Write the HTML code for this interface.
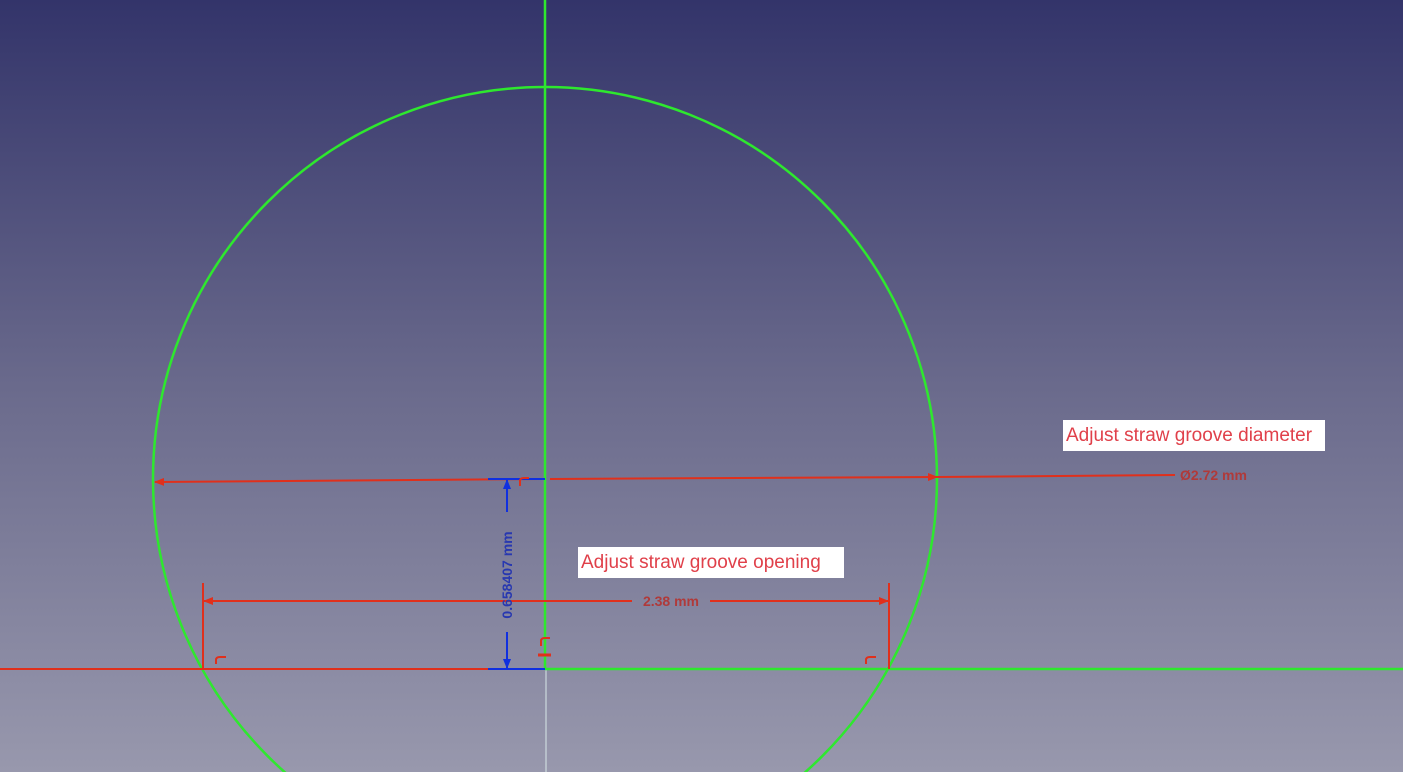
<!DOCTYPE html>
<html><head><style>
html,body{margin:0;padding:0;width:1403px;height:772px;overflow:hidden}
body{background:linear-gradient(#33346a 0%,#6a6a8c 50%,#9898ad 100%);position:relative}
svg{display:block}
.lbl{position:absolute;background:#fff;color:#e0404a;font:19px "Liberation Sans",sans-serif;padding:0 3px;height:31px;line-height:31px;box-sizing:border-box;white-space:nowrap;overflow:hidden}
</style></head><body>
<svg width="1403" height="772" style="position:absolute;left:0;top:0">
<defs>
<marker id="ar" markerWidth="10" markerHeight="8" refX="9" refY="4" orient="auto" markerUnits="userSpaceOnUse"><path d="M0,0L10,4L0,8z" fill="#e0301c"/></marker>
<marker id="ab" markerWidth="10" markerHeight="8" refX="9" refY="4" orient="auto" markerUnits="userSpaceOnUse"><path d="M0,0L10,4L0,8z" fill="#1030e0"/></marker>
</defs>
<circle cx="545" cy="479" r="392" fill="none" stroke="#2ee82e" stroke-width="2.5"/>
<line x1="545" y1="0" x2="545" y2="669" stroke="#2ee82e" stroke-width="2.5"/>
<line x1="546" y1="669" x2="546" y2="772" stroke="#d8e8e8" stroke-width="1"/>
<line x1="545" y1="669" x2="1403" y2="669" stroke="#2ee82e" stroke-width="2.5"/>
<line x1="0" y1="669" x2="545" y2="669" stroke="#e0301c" stroke-width="2"/>
<line x1="540" y1="479" x2="155" y2="482" stroke="#e0301c" stroke-width="2" marker-end="url(#ar)"/>
<line x1="550" y1="479" x2="937" y2="477" stroke="#e0301c" stroke-width="2" marker-end="url(#ar)"/>
<line x1="937" y1="477" x2="1175" y2="475" stroke="#e0301c" stroke-width="2"/>
<text x="1180" y="480" font-family="Liberation Sans,sans-serif" font-size="14" font-weight="bold" fill="#b03a3a">Ø2.72 mm</text>
<line x1="203" y1="583" x2="203" y2="669" stroke="#e0301c" stroke-width="2"/>
<line x1="889" y1="583" x2="889" y2="669" stroke="#e0301c" stroke-width="2"/>
<line x1="632" y1="601" x2="204" y2="601" stroke="#e0301c" stroke-width="2" marker-end="url(#ar)"/>
<line x1="710" y1="601" x2="888" y2="601" stroke="#e0301c" stroke-width="2" marker-end="url(#ar)"/>
<text x="671" y="606" text-anchor="middle" font-family="Liberation Sans,sans-serif" font-size="14" font-weight="bold" fill="#b03a3a">2.38 mm</text>
<line x1="488" y1="479" x2="545" y2="479" stroke="#1030e0" stroke-width="2"/>
<line x1="488" y1="669" x2="545" y2="669" stroke="#1030e0" stroke-width="2"/>
<line x1="507" y1="512" x2="507" y2="480" stroke="#1030e0" stroke-width="2" marker-end="url(#ab)"/>
<line x1="507" y1="632" x2="507" y2="668" stroke="#1030e0" stroke-width="2" marker-end="url(#ab)"/>
<text transform="translate(512,575) rotate(-90)" text-anchor="middle" font-family="Liberation Sans,sans-serif" font-size="14" font-weight="bold" fill="#2838b0">0.658407 mm</text>
<g stroke="#e0301c" stroke-width="2" fill="none">
<path d="M520,486 v-5 q0,-3 4,-3 h5"/>
<path d="M216,664 v-4 q0,-3 4,-3 h6"/>
<path d="M866,664 v-4 q0,-3 4,-3 h6"/>
<path d="M541,646 v-5 q0,-3 4,-3 h5"/>
<path d="M538,655 h13" stroke-width="3"/>
</g>
</svg>
<div class="lbl" style="left:1063px;top:420px;width:262px">Adjust straw groove diameter</div>
<div class="lbl" style="left:578px;top:547px;width:266px">Adjust straw groove opening</div>
</body></html>
